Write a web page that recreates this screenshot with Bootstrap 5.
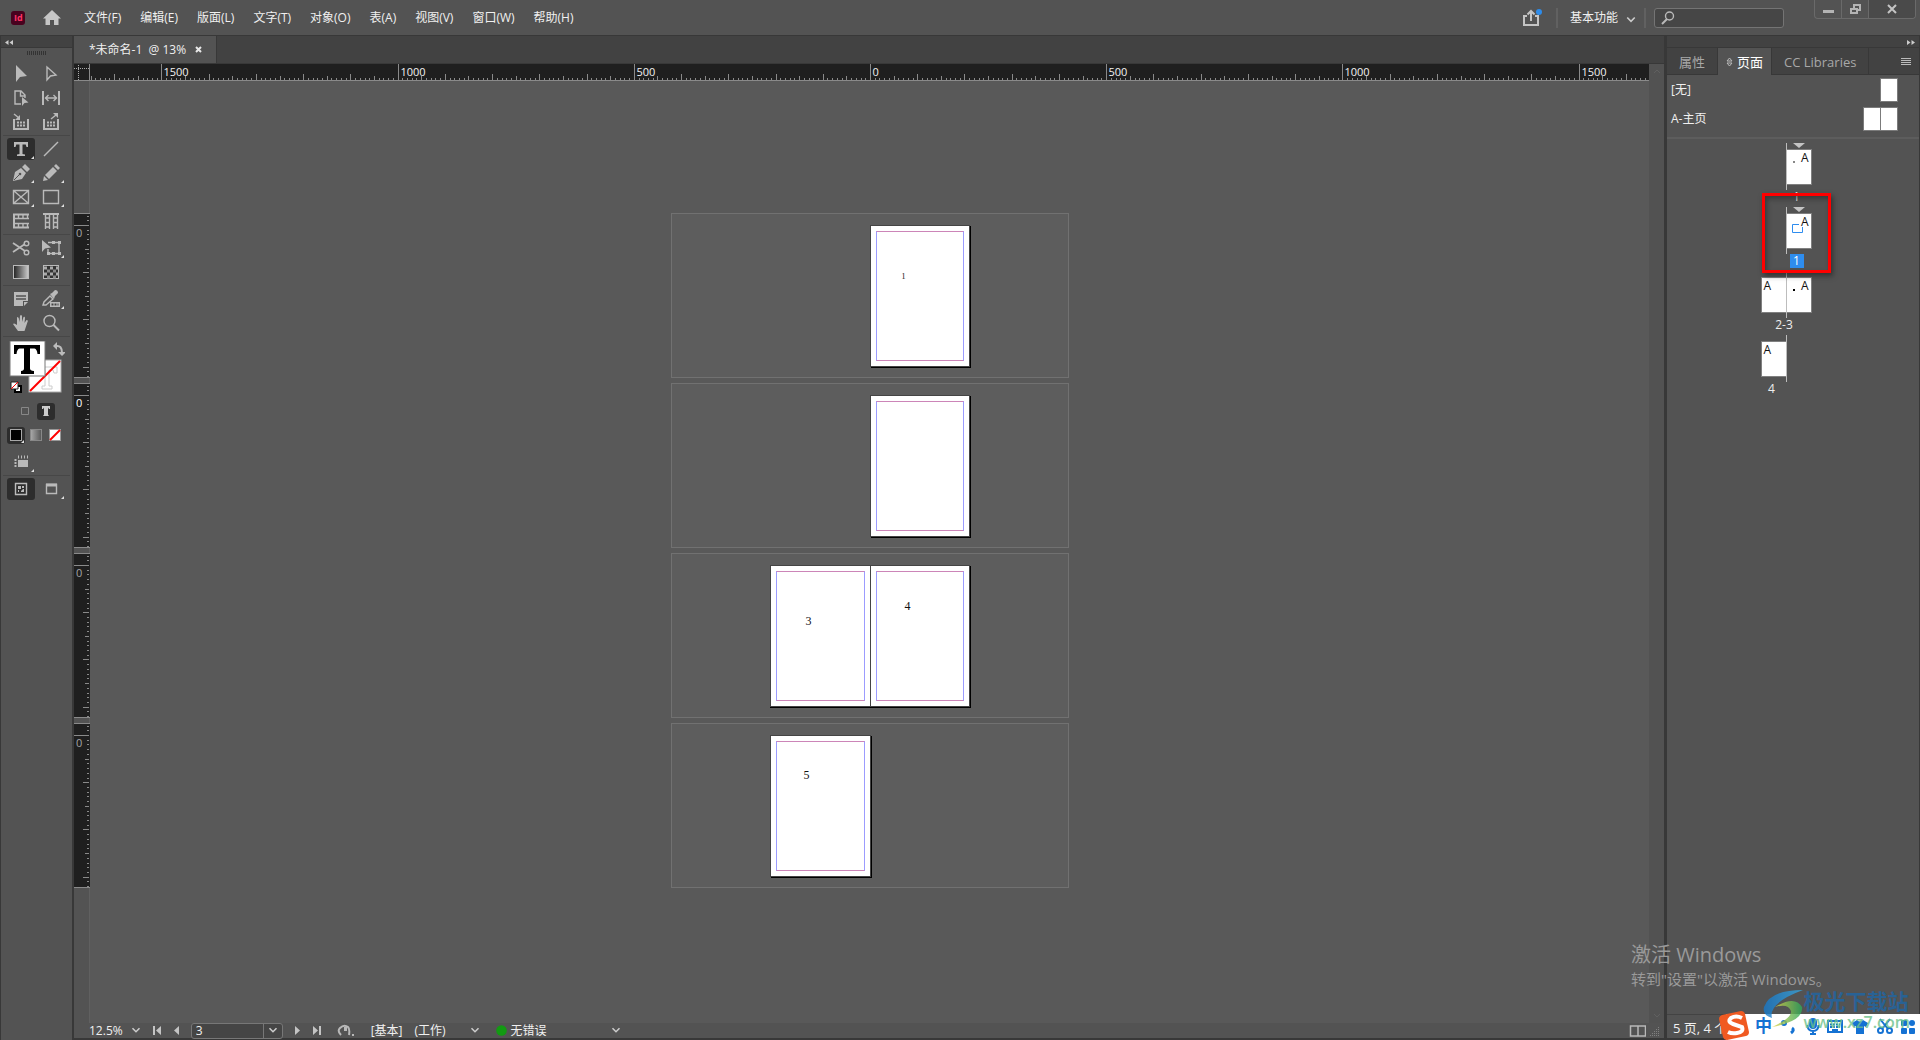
<!DOCTYPE html>
<html lang="zh-CN">
<head>
<meta charset="utf-8">
<meta name="viewport" content="width=device-width, initial-scale=1">
<title>未命名-1 @ 13%</title>
<link href="https://cdn.jsdelivr.net/npm/bootstrap@5.3.0/dist/css/bootstrap.min.css" rel="stylesheet">
<style>
:root{--ui:#535353;--line:#383838;--ico:#bababa;--dark:#424242}
body{font-family:"Open Sans","Noto Sans CJK SC",sans-serif;font-size:12px;line-height:16px;color:#f0f0f0;background:var(--ui);overflow:hidden}
button,.plain{background:none;border:0;padding:0;color:inherit;font-size:12px;line-height:16px}
svg{display:block;flex:none}
a{color:inherit;text-decoration:none}
.ico{fill:none;stroke:var(--ico);stroke-width:1.4}
.ico .f{fill:var(--ico);stroke:none}
.topbar{height:36px;padding-left:10px;border-bottom:1px solid var(--line)}
.menus{gap:19px;margin-left:22px}
.sepv{width:2px;height:20px;background:#616161}
.searchbox{width:130px;height:20px;border:1px solid #747474;border-radius:3px;background:#464646;padding-left:6px}
.searchbox input{width:96px;outline:0}
.winbtns{height:19px;margin-left:30px;border:1px solid #6a6a6a;border-top:0;border-radius:0 0 4px 4px;overflow:hidden}
.winbtns button{width:27px;border-right:1px solid #6a6a6a}
.winbtns button:last-child{width:46px;background:#4a4a4a;border:0}
.strip{height:12px;background:var(--dark);border-bottom:1px solid var(--line)}
.tools{width:74px;border-left:1px solid var(--line);border-right:2px solid var(--line)}
.grip{height:14px;padding-top:3px}
.grip i{width:19px;height:4px;background:repeating-linear-gradient(90deg,#333 0 1px,transparent 1px 2px)}
.tgrid{display:grid;grid-template-columns:30px 30px;margin-left:5px;padding:1px 0}
.tgrid.first{padding-top:0}
.tgrid.views{padding-top:3px}
.tcell{height:24px;display:flex;align-items:center;justify-content:center}
.tbtn{width:28px;height:22px;border-radius:3px;position:relative;display:flex;align-items:center;justify-content:center}
.tbtn.on{background:#2d2d2d}
.fly::after{content:"";position:absolute;right:1px;bottom:1px;border-left:3px solid transparent;border-bottom:3px solid #e0e0e0}
.rule{height:1px;margin:0 2px;background:#474747}
.swatches{height:62px;padding:4px 0 0 8px}
.trow{height:24px}
.trow.fills{padding-left:6px;gap:2px}
.small-on{width:18px;height:17px;background:#2d2d2d;border-radius:3px;position:relative}
.sw{width:12px;height:12px;border:1px solid #a8a8a8}
.tabbar{height:28px;background:var(--dark);border-bottom:1px solid var(--line)}
.doctab{padding:0 14px 0 15px;gap:9px;background:var(--ui);border-right:1px solid var(--line)}
.hr-row{height:17px}
.corner{width:16px;background:#1f1f1f;border-right:1px solid #8a8a8a;border-bottom:1px solid #8a8a8a}
.hruler{background:#1f1f1f;border-bottom:1px solid #8a8a8a}
.ticks{stroke:#8a8a8a;stroke-width:1;shape-rendering:crispEdges}
.ticks text{fill:#f2f2f2;stroke:none;font-size:11px;font-family:"Open Sans",sans-serif}
.stack{padding-top:132px;gap:5px}
.vruler{width:16px;border-right:1px solid #606060}
.vseg{height:165px;width:16px;background:#1f1f1f;border-top:1px solid #8a8a8a;border-bottom:1px solid #8a8a8a;overflow:hidden}
.vseg text{fill:#a5a5a5}
.vseg.cur text{fill:#fff}
.board{background:#595959}
.pasteboard{width:398px;height:165px;background:#5d5d5d;border:1px solid #717171;padding-top:11px;display:grid;grid-template-columns:1fr 1fr}
.leaf{width:100px;height:142px;background:#fff;border:1px solid #444;padding:5px;position:relative;box-shadow:1px 1px 0 #000}
.leaf.l{width:101px;justify-self:end;margin-right:-1px}
.leaf.l:not(:last-child){box-shadow:0 1px 0 #000}
.leaf.r{grid-column:2}
.guides{height:100%;border:1px solid #9c9cff;border-top-color:#cc85b8;border-bottom-color:#cc85b8}
.num{position:absolute;color:#111;font:12px/12px "Liberation Serif",serif}
.vscroll{width:15px;background:#525252}
.status{height:17px;padding-left:15px;border-bottom:2px solid var(--line)}
.status .nav-gap{margin:0 12px}
.status .gap-end{margin-right:12px}
.pagebox{width:92px;height:16px;border:1px solid #777;border-radius:3px;background:#454545}
.pagebox input{width:71px;padding-left:4px;line-height:14px;outline:0}
.pagebox button{width:19px;height:14px;border-left:1px solid #777}
.panel{width:256px;border-left:3px solid var(--line);border-right:1px solid var(--line)}
.ptabs{height:27px;background:var(--dark);border-bottom:1px solid var(--line);color:#a8a8a8}
.ptabs button{border-right:1px solid var(--line);height:26px;font-size:13px;padding:2px 12px 0}
.ptabs .on{background:var(--ui);color:#fff;height:27px;padding:0 8px}
.master{height:29px;padding:0 21px 0 4px}
.mini{width:18px;height:24px;background:#fff;border:1px solid #7b7b7b}
.mini+.mini{margin-left:-1px}
.masters{height:64px;border-bottom:2px solid #5d5d5d}
.plist{padding:4px 14px 0 0}
.spr{width:51px;height:64px;position:relative;padding-top:6px;color:#eee}
.spr::before{content:"";position:absolute;left:25px;top:0;width:1px;height:47px;background:#bdbdbd;z-index:1}
.pg{width:26px;height:36px;background:#fff;border:1px solid #808080;color:#111;font-size:12px;line-height:16px;position:relative;padding:0 2px}
.pg+.pg{margin-left:-1px}
.spr.one{padding-left:25px}
.lab{line-height:14px;margin-top:5px;padding-right:4px;text-align:center}
.spr.half{padding-right:25px}
.lab .sel{display:inline-block;width:14px;background:#2e8def;color:#fff}
.tri{position:absolute;top:0;left:32px;border:6px solid transparent;border-top:5px solid #c4c4c4;border-bottom:0}
.dot{position:absolute;left:6px;top:11px;width:2px;height:2px;background:#888}
.redbox{position:absolute;left:1px;top:-14px;width:69px;height:80px;border:3px solid #f00;box-shadow:2px 3px 5px #222a,inset 2px 3px 5px #2228;z-index:3}
.pfoot{height:26px;padding:5px 0 0 6px;border-top:1px solid #434343;border-bottom:2px solid var(--line);font-size:13px}
.activate{position:absolute;left:1631px;bottom:51px;color:#9a9a9a;font-size:15px;line-height:20px;z-index:5;pointer-events:none}
.activate b{display:block;font-weight:400;font-size:20px;line-height:28px}
.ime{position:absolute;right:0;bottom:0;width:194px;height:26px;background:#fff;z-index:6;padding:2px 5px 0 29px;color:#1572d3}
.ime button{font-size:17px;line-height:20px;font-weight:700}
.sogou{position:absolute;left:-9px;bottom:0}
.mark-logo{position:absolute;right:10px;bottom:10px;z-index:7;opacity:.8;pointer-events:none}
.mark-logo .t1{font-size:21px;line-height:26px;font-weight:700;color:#1f66a5}
.mark-logo .t2{font-size:16px;line-height:16px;color:#6cc28a;font-weight:600}
</style>
<script src="https://cdn.jsdelivr.net/npm/bootstrap@5.3.0/dist/js/bootstrap.bundle.min.js"></script>
</head>
<body class="vh-100 d-flex flex-column position-relative">
<svg width="0" height="0" class="position-absolute"><defs>
<symbol id="chev" viewBox="0 0 8 6"><path d="M1 1l3 3 3-3" fill="none" stroke="#ccc" stroke-width="1.3"/></symbol>
<linearGradient id="gr"><stop stop-color="#222"/><stop offset="1" stop-color="#ccc"/></linearGradient>
<linearGradient id="gr2"><stop stop-color="#aaa"/><stop offset="1" stop-color="#555"/></linearGradient>
<linearGradient id="sw1"><stop stop-color="#1878c8"/><stop offset="1" stop-color="#38a8e0"/></linearGradient>
<linearGradient id="sw2"><stop stop-color="#e5d84a"/><stop offset="1" stop-color="#2ca75a"/></linearGradient>
</defs></svg>

<header class="topbar d-flex align-items-center flex-shrink-0">
  <svg width="16" height="16"><rect x="1" y="1" width="14" height="14" rx="3" fill="#49021f"/><text x="4" y="11" font-size="9" font-weight="700" fill="#ff3366" font-family="Open Sans,sans-serif">Id</text></svg>
  <button class="ms-3" aria-label="主页"><svg width="20" height="17"><path d="M10 1L1 9.500h2.500V16h4.500v-5h4v5h4.500V9.500H19z" fill="#c6c6c6"/></svg></button>
  <nav class="menus d-flex">
    <a href="#">文件(F)</a><a href="#">编辑(E)</a><a href="#">版面(L)</a><a href="#">文字(T)</a><a href="#">对象(O)</a><a href="#">表(A)</a><a href="#">视图(V)</a><a href="#">窗口(W)</a><a href="#">帮助(H)</a>
  </nav>
  <div class="ms-auto d-flex align-items-center h-100">
    <button class="me-1" aria-label="共享"><svg width="22" height="20" fill="none" stroke="#c4c4c4" stroke-width="2"><path d="M5 8H2v9h14V8h-3M9 13V4M5.500 6.500L9 3l3.500 3.500"/><circle cx="17" cy="4" r="3" fill="#2d8ceb" stroke="none"/></svg></button>
    <span class="sepv ms-2"></span>
    <button class="d-flex align-items-center ps-2 ms-1">基本功能<svg class="ms-2 mt-1" width="10" height="8"><use href="#chev"/></svg></button>
    <span class="sepv me-2 ms-2"></span>
    <div class="searchbox d-flex align-items-center"><svg width="14" height="14" class="ico"><circle cx="8.500" cy="5" r="4"/><path d="M6 8L1 13" stroke-width="2"/></svg><input class="plain" type="search" aria-label="搜索"></div>
    <div class="winbtns d-flex align-self-start me-1">
      <button aria-label="最小化"><svg class="mx-auto mt-1" width="11" height="4"><rect y="1" width="11" height="3" fill="#b4b4b4"/></svg></button>
      <button aria-label="还原"><svg class="m-auto" width="13" height="12" fill="none" stroke="#b4b4b4" stroke-width="2"><path d="M5 5V2h6v5H8M2 6h6v4H2z"/></svg></button>
      <button aria-label="关闭"><svg class="m-auto" width="10" height="10" stroke="#c4c4c4" stroke-width="2"><path d="M1 1l8 8M9 1L1 9"/></svg></button>
    </div>
  </div>
</header>

<main class="d-flex flex-grow-1 overflow-hidden">
<aside class="tools flex-shrink-0">
  <div class="strip ps-1 pt-1"><svg width="8" height="5"><path d="M3.500 0v5L0 2.500zM8 0v5L4.500 2.500z" fill="#ccc"/></svg></div>
  <div class="grip d-flex justify-content-center"><i></i></div>
  <div class="tgrid first">
    <div class="tcell"><button class="tbtn" aria-label="选择"><svg class="ico" width="18" height="18"><path class="f" d="M4 0v17l4-5 7-1z"/></svg></button></div>
    <div class="tcell"><button class="tbtn" aria-label="直接选择"><svg class="ico" width="18" height="18"><path d="M5 2v13l3.500-4 5.500-1z"/></svg></button></div>
    <div class="tcell"><button class="tbtn" aria-label="页面"><svg class="ico" width="18" height="18"><path d="M9 15H3V2h6l4 4v3M8.500 2v5H13"/><path class="f" d="M10 8v9l2.500-3 4-.5z"/></svg></button></div>
    <div class="tcell"><button class="tbtn" aria-label="间隙"><svg class="ico" width="18" height="18"><path d="M1 2v14M17 2v14" stroke-width="2"/><path d="M3 9h12M6.500 6l-3 3 3 3M11.500 6l3 3-3 3"/></svg></button></div>
    <div class="tcell"><button class="tbtn" aria-label="内容收集"><svg class="ico" width="18" height="18"><path d="M3 7H2v9h14V7h-1" stroke-width="2"/><path d="M5 9.500h8M5 12.500h8" stroke-width="2" stroke-dasharray="2 1"/><path d="M2 1l5 4"/><path class="f" d="M8 2v5H3z"/></svg></button></div>
    <div class="tcell"><button class="tbtn" aria-label="内容置入"><svg class="ico" width="18" height="18"><path d="M3 7H2v9h14V7h-1" stroke-width="2"/><path d="M5 9.500h8M5 12.500h8" stroke-width="2" stroke-dasharray="2 1"/><path d="M9 6l5-4"/><path class="f" d="M11 0h5v5z"/></svg></button></div>
  </div>
  <div class="rule"></div>
  <div class="tgrid">
    <div class="tcell"><button class="tbtn on fly" aria-label="文字"><svg class="ico" width="18" height="18"><path class="f" d="M2 2h14v5h-1.500l-.8-2.500h-3.200v9.500l2.500.5V16H5v-1.500l2.500-.5V4.500H4.300L3.500 7H2z"/></svg></button></div>
    <div class="tcell"><button class="tbtn" aria-label="直线"><svg class="ico" width="18" height="18"><path d="M2 16L16 2"/></svg></button></div>
    <div class="tcell"><button class="tbtn fly" aria-label="钢笔"><svg class="ico" width="18" height="18"><path class="f" d="M1 17l2-9 6-4 5 5-4 6zM10 3l3-3 5 5-3 3z"/><path d="M2 16l5-5" stroke="#535353" stroke-width="1"/><circle cx="8" cy="10" r="1.300" fill="#535353" stroke="none"/></svg></button></div>
    <div class="tcell"><button class="tbtn fly" aria-label="铅笔"><svg class="ico" width="18" height="18"><path class="f" d="M1 17l1-5 4 4zM3 11L11 3l4 4-8 8zM12 2l2-2 4 4-2 2z"/></svg></button></div>
    <div class="tcell"><button class="tbtn fly" aria-label="矩形框架"><svg class="ico" width="18" height="18"><path d="M1.500 2.500h15v13h-15zM2 3l14 12M16 3L2 15"/></svg></button></div>
    <div class="tcell"><button class="tbtn fly" aria-label="矩形"><svg class="ico" width="18" height="18"><path d="M1.500 2.500h15v13h-15z"/></svg></button></div>
    <div class="tcell"><button class="tbtn" aria-label="水平网格"><svg class="ico" width="18" height="18"><path d="M1 6.500h16M1 11.500h16M2 2v5M6.500 2v5M11 2v5M15.500 2v5M2 11v5M6.500 11v5M11 11v5M15.500 11v5"/><path d="M1 2.500h16M1 15.500h16M2 2v14" stroke-width="2"/></svg></button></div>
    <div class="tcell"><button class="tbtn" aria-label="垂直网格"><svg class="ico" width="18" height="18"><path d="M3.500 1v16M7.500 1v16M11.500 1v16M15.500 1v16M3 6h5M3 10.500h5M3 15h5M11 6h5M11 10.500h5M11 15h5"/><path d="M1 2h16" stroke-width="2"/></svg></button></div>
  </div>
  <div class="rule"></div>
  <div class="tgrid">
    <div class="tcell"><button class="tbtn" aria-label="剪刀"><svg class="ico" width="18" height="18"><path d="M1 4l12 8M1 13l12-8" stroke-width="1.800"/><circle cx="14.500" cy="4.500" r="2.300"/><circle cx="14.500" cy="13.500" r="2.300"/></svg></button></div>
    <div class="tcell"><button class="tbtn fly" aria-label="自由变换"><svg class="ico" width="22" height="18"><path class="f" d="M2 1v12l3-3.500 6-1z"/><path d="M8 3.500h11v11H8V10"/><path class="f" d="M18 2h3v3h-3zM18 13h3v3h-3zM7 13h3v3H7zM12 2h3v3h-3zM12 13h3v3h-3z"/></svg></button></div>
    <div class="tcell"><button class="tbtn" aria-label="渐变色板"><svg width="18" height="18"><rect x="1.500" y="2.500" width="15" height="13" fill="url(#gr)" stroke="#bababa"/></svg></button></div>
    <div class="tcell"><button class="tbtn" aria-label="渐变羽化"><svg width="18" height="18"><rect x="1.500" y="2.500" width="15" height="13" fill="#333" stroke="#bababa"/><path d="M2 5h15M2 11h15" stroke="#aaa" stroke-width="3" stroke-dasharray="3"/><path d="M5 8h12M5 14h12" stroke="#888" stroke-width="3" stroke-dasharray="3"/></svg></button></div>
  </div>
  <div class="rule"></div>
  <div class="tgrid">
    <div class="tcell"><button class="tbtn" aria-label="附注"><svg class="ico" width="18" height="18"><path class="f" d="M2 2h14v9h-5v5H2zM12 12h4l-4 4z"/><path d="M4 6h10M4 9h10" stroke="#535353"/></svg></button></div>
    <div class="tcell"><button class="tbtn fly" aria-label="颜色主题"><svg class="ico" width="20" height="18"><path d="M2 15l1-3 6-6 3 3-7 6z"/><path class="f" d="M9 4l2-1 3-3q3 0 3 3l-3 3-1 3zM9 12h10v5H9z"/><path d="M10.500 14.500h7" stroke="#444" stroke-width="2" stroke-dasharray="2 1"/></svg></button></div>
    <div class="tcell"><button class="tbtn" aria-label="抓手"><svg class="ico" width="18" height="18"><path class="f" d="M6 17l-5-7q1-1.500 4 1V4q0-2 1.700 0L7.500 8 8 2q1-2 2 0v6l1.500-5q1.500-1 1.500 1l-.5 5 2-3q2 0 1 2l-2 6-1 3z"/></svg></button></div>
    <div class="tcell"><button class="tbtn" aria-label="缩放"><svg class="ico" width="18" height="18"><circle cx="7.500" cy="7" r="5.500"/><path d="M11.500 11l5.500 5.500" stroke-width="2"/></svg></button></div>
  </div>
  <div class="rule"></div>
  <div class="swatches">
    <svg width="56" height="54"><rect x="20" y="19" width="32" height="32" fill="#fff" stroke="#aaa"/><path d="M28 26h20v6h-3l-1-3h-4v16h3v3H33v-3h3V29h-4l-1 3h-3z" fill="none" stroke="#ccc"/><path d="M21 50L51 20" stroke="#f00" stroke-width="2"/><rect x="1" y="0" width="35" height="35" fill="#fff" stroke="#777"/><path d="M5 4h26v9h-2.500q-.5-5-3-5.500H21v20q0 2 4 2.500V33H12v-3q3-.5 3-2.500v-20h-4.500q-2.500.5-3 5.500H5z" fill="#000"/><path d="M47 5q6-1 6 7" fill="none" stroke="#bbb" stroke-width="2"/><path d="M48 1v8l-4-4zM49 11h8l-4 4z" fill="#bbb"/><path d="M6 45h6v6H6z" fill="#fff" stroke="#000" stroke-width="2"/><path d="M2 41h7v7H2z" fill="#fff" stroke="#222"/><path d="M2 48l7-7" stroke="#f00"/></svg>
  </div>
  <div class="trow d-flex align-items-center"><button class="ms-3 me-1 p-1" aria-label="格式针对容器"><svg width="8" height="8"><path d="M.5.5h7v7h-7z" fill="none" stroke="#888"/></svg></button><button class="small-on d-flex align-items-center justify-content-center" aria-label="格式针对文本"><svg width="10" height="10"><path d="M1 0h8v3H8L7 1.500v7L8 10H2l1-1.500v-7L2 3H1z" fill="#ccc"/></svg></button></div>
  <div class="trow fills d-flex align-items-center"><button class="small-on fly d-flex align-items-center justify-content-center" aria-label="应用颜色"><span class="sw bg-black"></span></button><button aria-label="应用渐变"><svg width="18" height="12"><rect x="3.500" y=".5" width="11" height="11" fill="url(#gr2)" stroke="#888"/></svg></button><button aria-label="应用无"><svg width="16" height="12"><rect x="2.500" y=".5" width="11" height="11" fill="#fff" stroke="#999"/><path d="M3 11L13 1" stroke="#f00" stroke-width="2"/></svg></button></div>
  <div class="tgrid views"><div class="tcell"><button class="tbtn fly" aria-label="视图选项"><svg class="ico" width="18" height="18"><path class="f" d="M6 7h10v7H6z"/><path d="M6 4h11" stroke-dasharray="1 2" stroke-width="3"/><path d="M3.500 6v9" stroke-dasharray="2 1" stroke-width="2"/></svg></button></div></div>
  <div class="rule"></div>
  <div class="tgrid">
    <div class="tcell"><button class="tbtn on" aria-label="正常模式"><svg class="ico" width="14" height="14"><path d="M1.500 1.500h11v11h-11z"/><path d="M4 4h3v3H4zM8 4h2v2H8zM9 7h1v3H7V9zM4 8h1v2H4z" fill="#bababa" stroke="none"/></svg></button></div>
    <div class="tcell"><button class="tbtn fly" aria-label="屏幕模式"><svg class="ico" width="14" height="14"><path d="M2.500 2.500h10v9h-10z"/><path d="M2 3h11" stroke-width="3"/></svg></button></div>
  </div>
</aside>

<section class="d-flex flex-column flex-grow-1 overflow-hidden">
  <div class="tabbar d-flex flex-shrink-0"><div class="doctab d-flex align-items-center"><span>*未命名-1 &nbsp;@ 13%</span><button aria-label="关闭文档"><svg width="7" height="7" stroke="#e8e8e8" stroke-width="2"><path d="M1 1l5 5M6 1L1 6"/></svg></button></div></div>
  <div class="d-flex flex-grow-1 overflow-hidden">
    <div class="d-flex flex-column flex-grow-1 overflow-hidden">
      <div class="hr-row d-flex flex-shrink-0"><div class="corner flex-shrink-0"><svg width="15" height="16" stroke="#aaa" stroke-dasharray="1 1"><path d="M4.500 1v15M0 4.500h15"/></svg></div><div class="hruler flex-grow-1 d-flex justify-content-center overflow-hidden"><svg id="hr" class="ticks" width="2400" height="16"></svg></div></div>
      <div class="d-flex flex-grow-1 overflow-hidden">
        <div class="vruler stack d-flex flex-column flex-shrink-0"><div class="vseg"></div><div class="vseg cur"></div><div class="vseg"></div><div class="vseg"></div></div>
        <div class="board stack d-flex flex-column align-items-center flex-grow-1">
          <div class="pasteboard"><div class="leaf r"><div class="guides"></div><span class="num" style="left:31px;top:45px;font-size:8px">1</span></div></div>
          <div class="pasteboard"><div class="leaf r"><div class="guides"></div></div></div>
          <div class="pasteboard"><div class="leaf l"><div class="guides"></div><span class="num" style="left:35px;top:49px">3</span></div><div class="leaf r"><div class="guides"></div><span class="num" style="left:34px;top:34px">4</span></div></div>
          <div class="pasteboard"><div class="leaf l"><div class="guides"></div><span class="num" style="left:33px;top:33px">5</span></div></div>
        </div>
      </div>
    </div>
    <div class="vscroll flex-shrink-0 d-flex flex-column justify-content-between align-items-center py-1"><svg width="8" height="6" stroke="#606060" fill="none"><path d="M1 5l3-3 3 3"/></svg><svg width="8" height="6" stroke="#606060" fill="none"><path d="M1 1l3 3 3-3"/></svg></div>
  </div>
  <div class="status d-flex align-items-center flex-shrink-0">
    <span>12.5%</span><button class="ms-2 gap-end" aria-label="缩放级别"><svg width="10" height="7"><use href="#chev"/></svg></button>
    <button aria-label="第一页"><svg width="9" height="9" fill="#c4c4c4"><path d="M0 0h2v9H0zM8 0v9L3 4.500z"/></svg></button>
    <button class="nav-gap" aria-label="上一页"><svg width="5" height="9" fill="#c4c4c4"><path d="M5 0v9L0 4.500z"/></svg></button>
    <div class="pagebox d-flex"><input class="plain" type="text" value="3" aria-label="页码"><button aria-label="选择页码"><svg class="m-auto" width="10" height="7"><use href="#chev"/></svg></button></div>
    <button class="nav-gap" aria-label="下一页"><svg width="5" height="9" fill="#c4c4c4"><path d="M0 0v9l5-4.500z"/></svg></button>
    <button aria-label="最后一页"><svg width="9" height="9" fill="#c4c4c4"><path d="M7 0h2v9H7zM1 0v9l5-4.500z"/></svg></button>
    <button class="ms-3 me-2" aria-label="打开"><svg width="18" height="13" fill="none" stroke="#b8b8b8" stroke-width="2"><path d="M4 11Q0 7 3 4q4-4 8-1 2 2 1 8"/><path d="M7 3v4h3V3z" fill="#b8b8b8" stroke="none"/><path d="M15 10h2v2h-2z" fill="#b8b8b8" stroke="none"/></svg></button>
    <span class="ps-2">[基本]</span><span class="ms-2 ps-1">(工作)</span>
    <button class="ms-4 gap-end" aria-label="预检配置"><svg width="10" height="7"><use href="#chev"/></svg></button>
    <svg class="ms-1 me-1" width="11" height="11"><circle cx="5.500" cy="5.500" r="5.300" fill="#129a12"/></svg><span>无错误</span>
    <button class="ms-5 ps-3" aria-label="预检菜单"><svg width="10" height="7"><use href="#chev"/></svg></button>
    <button class="ms-auto me-1" aria-label="拆分版面"><svg width="17" height="12" fill="none" stroke="#b8b8b8"><path d="M1.500 1h15v10h-15zM9 1v10" stroke-width="1.500"/></svg></button>
    <svg class="me-1" width="10" height="10" stroke="#808080" stroke-width="1" stroke-dasharray="1 1"><path d="M8 1.500h2M6 3.500h4M4 5.500h6M2 7.500h8M0 9.500h10"/></svg>
  </div>
</section>

<aside class="panel flex-shrink-0 d-flex flex-column">
  <div class="strip d-flex justify-content-end pe-1 pt-1"><svg width="8" height="5"><path d="M0 0v5l3.500-2.500zM4.500 0v5L8 2.500z" fill="#ccc"/></svg></div>
  <div class="ptabs d-flex flex-shrink-0"><button>属性</button><button class="on d-flex align-items-center"><svg class="me-1" width="7" height="10" fill="none" stroke="#bbb"><path d="M1 4l2.500-3 2.500 3zM1 6l2.500 3 2.500-3z"/></svg>页面</button><button>CC Libraries</button><button class="ms-auto px-0 border-0" aria-label="面板菜单"><svg class="me-2" width="10" height="8" stroke="#bbb"><path d="M0 .5h10M0 2.500h10M0 4.500h10M0 6.500h10"/></svg></button></div>
  <div class="masters flex-shrink-0">
    <div class="master d-flex align-items-center justify-content-between"><span>[无]</span><span class="d-flex"><i class="mini"></i></span></div>
    <div class="master d-flex align-items-center justify-content-between"><span>A-主页</span><span class="d-flex"><i class="mini"></i><i class="mini"></i></span></div>
  </div>
  <div class="plist d-flex flex-column align-items-center flex-grow-1">
    <div class="spr one"><i class="tri"></i><div class="pg text-end"><i class="dot"></i>A</div><div class="lab">1</div></div>
    <div class="spr one"><i class="tri"></i><div class="pg text-end">A<svg class="position-absolute start-0 top-0" width="20" height="24"><path d="M12 10.500H5.500v8h10V13" fill="none" stroke="#2e8def"/></svg></div><div class="lab"><span class="sel">1</span></div><div class="redbox"></div></div>
    <div class="spr"><div class="d-flex"><div class="pg">A</div><div class="pg text-end"><i class="dot bg-black"></i>A</div></div><div class="lab">2-3</div></div>
    <div class="spr half"><div class="pg">A</div><div class="lab">4</div></div>
  </div>
  <div class="pfoot flex-shrink-0">5 页, 4 个跨页</div>
</aside>
</main>

<div class="activate"><b>激活 Windows</b>转到"设置"以激活 Windows。</div>
<div class="ime d-flex justify-content-between align-items-start">
  <svg class="sogou" width="34" height="30"><path d="M2 9q0-3 3-4L24 1q3 0 4 3l4 18q0 3-3 4L10 30q-3 0-4-3z" fill="#f05a22"/><path d="M25 8q-6-3-11 0-4 4 2 6t9 3q2 5-5 6-5 1-9-1" fill="none" stroke="#fff" stroke-width="4"/></svg>
  <button>中</button>
  <button aria-label="标点"><svg width="18" height="20" fill="none" stroke="#1572d3" stroke-width="2"><circle cx="4" cy="7" r="2"/><path d="M12 12q3 2-1 5" stroke-width="3"/></svg></button>
  <button aria-label="语音"><svg width="14" height="20" fill="none" stroke="#1572d3" stroke-width="2"><rect x="4" y="3" width="6" height="9" rx="3" fill="#1572d3"/><path d="M1.500 9q0 6 5.500 6t5.500-6M7 15v3M4 18h6"/></svg></button>
  <button aria-label="键盘"><svg width="16" height="20" fill="none" stroke="#1572d3" stroke-width="2"><path d="M1 5h14v11H1z"/><path d="M3 8.500h10M3 11h10" stroke-dasharray="2 1"/><path d="M5 14h6"/></svg></button>
  <button aria-label="皮肤"><svg width="18" height="20" fill="#1572d3"><path d="M6 4q3 3 6 0l5 3-2 4-2-1v8H5v-8l-2 1-2-4z"/></svg></button>
  <button aria-label="截图"><svg width="16" height="20" fill="none" stroke="#1572d3" stroke-width="2"><path d="M3 3l8 10M13 3L5 13"/><circle cx="3.500" cy="14.500" r="2.500"/><circle cx="12.500" cy="14.500" r="2.500"/></svg></button>
  <button aria-label="工具箱"><svg width="14" height="20" fill="#1572d3"><rect y="4" width="6" height="6" rx="1"/><rect x="8" y="4" width="6" height="6" rx="3"/><rect y="12" width="6" height="6" rx="1"/><rect x="8" y="12" width="6" height="6" rx="1"/></svg></button>
</div>
<div class="mark-logo d-flex"><svg width="42" height="40"><path d="M41 2Q8 2 2 19q-2 8 8 11-4-15 31-28z" fill="url(#sw1)"/><path d="M13 19q20-12 27 0 2 14-30 20 20-9 19-16-3-8-16-4z" fill="url(#sw2)"/></svg><div><div class="t1">极光下载站</div><div class="t2">www.xz7.com</div></div></div>

<script>
// One document unit is 0.4724px at 12.5% zoom; a tick is drawn every 10 units.
const STEP = 4.724, NS = 'http://www.w3.org/2000/svg';
function line(svg, x1, y1, x2, y2) {
  const l = document.createElementNS(NS, 'line');
  Object.entries({x1, y1, x2, y2}).forEach(([k, v]) => l.setAttribute(k, v));
  svg.appendChild(l);
}
function label(svg, x, y, s) {
  const t = document.createElementNS(NS, 'text');
  t.setAttribute('x', x); t.setAttribute('y', y); t.textContent = s;
  svg.appendChild(t);
}
const len = i => i % 10 === 0 ? 6 : i % 5 === 0 ? 4 : 2;
const hr = document.getElementById('hr');
const half = hr.parentElement.clientWidth / 2;
for (let i = -250; i <= 250; i++) {
  const x = Math.round(1200 + i * STEP) + .5;
  if (Math.abs(x - 1200) > half) continue;
  line(hr, x, i % 50 === 0 ? 0 : 16 - len(i), x, 16);
  if (i % 50 === 0) label(hr, x + 2, 12, Math.abs(i * 10));
}
document.querySelectorAll('.vseg').forEach(seg => {
  const svg = document.createElementNS(NS, 'svg');
  svg.setAttribute('class', 'ticks'); svg.setAttribute('width', 15); svg.setAttribute('height', 165);
  for (let i = -2; i < 33; i++) {
    const y = Math.round(11 + i * STEP) + .5;
    line(svg, i === 0 ? 0 : 15 - len(i), y, 15, y);
  }
  label(svg, 2, 23, '0');
  seg.appendChild(svg);
});
</script>
</body>
</html>
